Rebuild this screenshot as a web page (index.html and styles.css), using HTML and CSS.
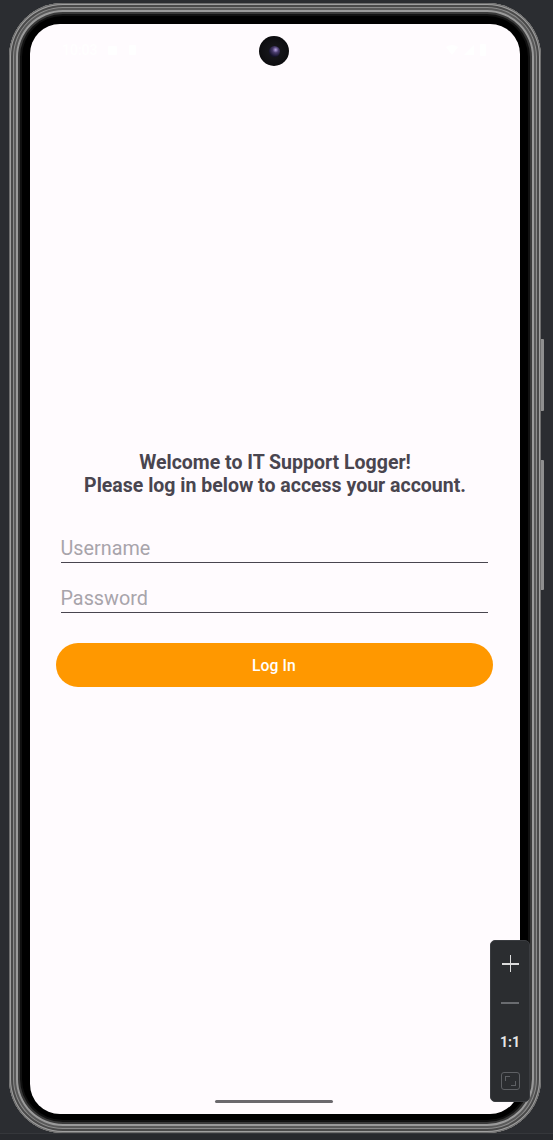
FILE: index.html
```html
<!DOCTYPE html>
<html>
<head>
<meta charset="utf-8">
<title>IT Support Logger</title>
<link rel="stylesheet" href="styles.css">
</head>
<body>
<div class="stage">
  <div class="phone">
    <span class="side-btn side-btn-1"></span>
    <span class="side-btn side-btn-2"></span>
    <div class="screen">
      <div class="statusbar">
        <div class="sb-left">
          <span class="time">10:03</span>
          <span class="sb-icon sq"></span>
          <span class="sb-icon card"></span>
        </div>
        <div class="sb-right">
          <svg class="sb-svg" width="12" height="10" viewBox="0 0 12 10"><path d="M0 2 Q6 -2 12 2 L6 10 Z" fill="#fff"/></svg>
          <svg class="sb-svg" width="10" height="10" viewBox="0 0 10 10"><path d="M0 10 L10 0 L10 10 Z" fill="#fff"/></svg>
          <span class="sb-icon battery"></span>
        </div>
      </div>
      <span class="camera"><span class="lens"></span></span>

      <main class="login">
        <h1 class="welcome">Welcome to IT Support Logger!<br>Please log in below to access your account.</h1>
        <div class="field">Username</div>
        <div class="field field-2">Password</div>
        <button class="btn">Log In</button>
      </main>

      <span class="home-bar"></span>
    </div>
  </div>
  <div class="floor"></div>
  <div class="zoom-panel">
    <span class="zp-plus"></span>
    <span class="zp-minus"></span>
    <span class="zp-ratio">1:1</span>
    <span class="zp-fit"><span class="fit-a"></span><span class="fit-b"></span></span>
  </div>
</div>
</body>
</html>
```

FILE: styles.css
```css
html, body {
  margin: 0;
  padding: 0;
  background: #2b2d31;
  font-family: Roboto, "Noto Sans", "Liberation Sans", sans-serif;
}

.stage {
  position: relative;
  width: 553px;
  height: 1140px;
  overflow: hidden;
  padding-top: 3px;
  box-sizing: border-box;
}

.phone {
  position: relative;
  margin-left: 9px;
  width: 532px;
  height: 1130px;
  box-sizing: border-box;
  padding: 21px 21px 19px 21px;
  border-radius: 54px;
  background: #000;
  box-shadow:
    inset 0 0 0 1px #6e6e6e,
    inset 0 0 0 2px #a0a0a0,
    inset 0 0 0 4px #4a4a4a,
    inset 0 0 0 5px #8c8c8c,
    inset 0 0 0 7px #5a5a5a,
    inset 0 0 0 9px #9a9a9a,
    inset 0 0 0 11px #3a3a3a,
    inset 0 0 0 13px #111;
}

.side-btn {
  position: absolute;
  right: -3px;
  width: 3px;
  background: #8f8f8f;
  border-radius: 0 1px 1px 0;
}
.side-btn-1 { top: 336px; height: 72px; }
.side-btn-2 { top: 457px; height: 130px; }

.screen {
  position: relative;
  width: 490px;
  height: 1090px;
  background: #fffbfe;
  border-radius: 30px;
  overflow: hidden;
}

.statusbar {
  height: 54px;
  display: flex;
  justify-content: space-between;
  align-items: center;
  padding: 0 34px 0 32px;
  box-sizing: border-box;
}
.statusbar > div { display: flex; align-items: center; gap: 6px; margin-top: -2px; }
.time { color: #fff; font-size: 14px; font-weight: 500; }
.sb-icon { display: inline-block; background: #fff; }
.sq { width: 9px; height: 9px; border-radius: 1px; margin-left: 4px; }
.card { width: 7px; height: 10px; border-radius: 1px; margin-left: 6px; }
.battery { width: 6px; height: 12px; border-radius: 1px; }

.camera {
  position: absolute;
  left: 229px;
  top: 12px;
  width: 30px;
  height: 30px;
  border-radius: 50%;
  background: radial-gradient(circle at 50% 50%, #1a1a1f 0, #101013 55%, #050505 100%);
  display: flex;
  align-items: center;
  justify-content: center;
}
.lens {
  width: 11px;
  height: 11px;
  border-radius: 50%;
  background: radial-gradient(circle at 60% 35%, #b9a5e6 0, #4a3d6e 30%, #14122a 70%);
}

.login {
  display: flex;
  flex-direction: column;
  align-items: center;
  padding-top: 373px;
}

.welcome {
  margin: 0;
  font-size: 19.5px;
  line-height: 23px;
  font-weight: 700;
  color: #49454f;
  text-align: center;
}

.field {
  margin-top: 39px;
  margin-right: 2px;
  width: 427px;
  font-size: 19.8px;
  line-height: 25px;
  padding-bottom: 1px;
  border-bottom: 1px solid #49454f;
  color: #a8a4ab;
}
.field-2 { margin-top: 23px; }

.btn {
  margin-top: 30px;
  margin-right: 2px;
  width: 437px;
  height: 44px;
  border: 0;
  border-radius: 22px;
  background: #ff9800;
  color: #fff;
  font-family: Roboto, "Noto Sans", sans-serif;
  font-size: 15.7px;
  font-weight: 500;
  letter-spacing: 0.1px;
}

.home-bar {
  position: absolute;
  left: 185px;
  bottom: 11px;
  width: 118px;
  height: 3px;
  border-radius: 2px;
  background: #6b696d;
}

.floor {
  position: absolute;
  left: 0;
  right: 0;
  top: 1133px;
  height: 7px;
  background: #27292d;
  border-top: 1px solid #35373b;
}

.zoom-panel {
  position: absolute;
  left: 490px;
  top: 940px;
  width: 40px;
  height: 162px;
  box-sizing: border-box;
  background: #2b2d30;
  border: 1px solid #3a3c40;
  border-radius: 5px;
  display: flex;
  flex-direction: column;
  align-items: center;
}
.zp-plus {
  position: relative;
  width: 17px;
  height: 17px;
  margin-top: 14px;
}
.zp-plus::before, .zp-plus::after {
  content: "";
  position: absolute;
  background: #dcdcdc;
}
.zp-plus::before { left: 0; right: 0; top: 8px; height: 1.5px; }
.zp-plus::after { top: 0; bottom: 0; left: 8px; width: 1.5px; }
.zp-minus {
  width: 18px;
  height: 1.5px;
  background: #6a6c70;
  margin-top: 30px;
}
.zp-ratio {
  margin-top: 30px;
  color: #e6e6e6;
  font-size: 14px;
  font-weight: 700;
  line-height: 16px;
}
.zp-fit {
  position: relative;
  margin-top: 22px;
  width: 19px;
  height: 18px;
  box-sizing: border-box;
  border: 1.5px solid #5e6064;
  border-radius: 3px;
}
.fit-a {
  position: absolute;
  left: 3px; top: 3px;
  width: 4px; height: 4px;
  border-left: 1.5px solid #5e6064;
  border-top: 1.5px solid #5e6064;
}
.fit-b {
  position: absolute;
  right: 3px; bottom: 3px;
  width: 4px; height: 4px;
  border-right: 1.5px solid #5e6064;
  border-bottom: 1.5px solid #5e6064;
}
```
